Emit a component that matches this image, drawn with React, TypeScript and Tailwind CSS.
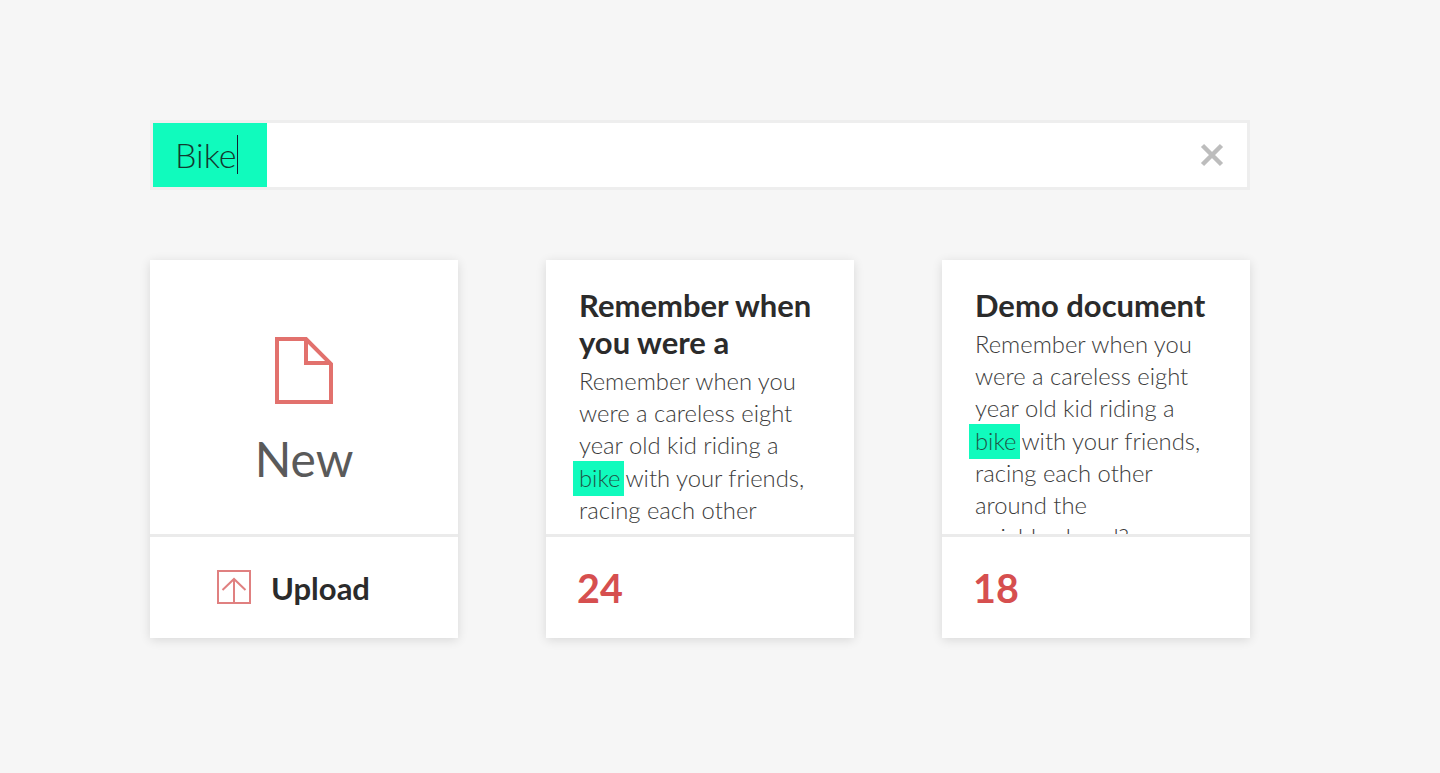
import React from 'react';

const CARDS = [
  {
    title: ['Remember when', 'you were a'],
    lines: ['Remember when you', 'were a careless eight', 'year old kid riding a', 'HL', 'racing each other', 'around the', 'neighborhood?'],
    count: 24,
  },
  {
    title: ['Demo document'],
    lines: ['Remember when you', 'were a careless eight', 'year old kid riding a', 'HL', 'racing each other', 'around the', 'neighborhood?'],
    count: 18,
  },
];

function DocCard({ title, lines, count }: { title: string[]; lines: string[]; count: number }) {
  return (
    <div className="w-[308px] h-[378px] flex flex-col bg-white shadow-[0_2px_10px_rgba(0,0,0,0.12)]">
      <div className="h-[274px] overflow-hidden px-[33px] pt-[27px]">
        <h3 className="text-[31px] leading-[37px] font-bold text-[#2b2b2b] whitespace-nowrap">
          {title.map(t => <div key={t}>{t}</div>)}
        </h3>
        <div className="mt-[4px] text-[23.8px] leading-[32.2px] font-light text-[#3c3c3c] whitespace-nowrap">
          {lines.map(line => line === 'HL' ? (
            <div key={line}>
              <span className="bg-[#10fbbd] -ml-[6px] pl-[6px] pr-[4px] pt-[3px] pb-[4px] mr-[1px] text-[#1f5546]">bike</span>with your friends,
            </div>
          ) : (
            <div key={line}>{line}</div>
          ))}
        </div>
      </div>
      <div className="h-[104px] border-t-[3px] border-[#ebebeb] flex items-center px-[31px]">
        <span className="text-[39.5px] font-bold text-[#d64f4f] leading-none">{count}</span>
      </div>
    </div>
  );
}

export default function App() {
  return (
    <div className="min-h-[773px] bg-[#f6f6f6] pt-[120px] pl-[150px] font-['Lato',sans-serif] overflow-hidden">
      <div className="w-[1100px] h-[70px] flex items-stretch justify-between bg-white border-[3px] border-[#eeeeee]">
        <div className="w-[114px] bg-[#10fbbd] flex items-center pl-[22px] pb-[2px] text-[34px] font-light text-[#123a30]">
          Bike<span className="w-[1px] h-[39px] bg-[#123] ml-[1px]" />
        </div>
        <div className="flex items-center pr-[23px]">
          <svg width="24" height="24" viewBox="0 0 24 24" fill="none">
            <path d="M2.5 2.5 L21.5 21.5 M21.5 2.5 L2.5 21.5" stroke="#bdbdbd" strokeWidth="4.5" />
          </svg>
        </div>
      </div>

      <div className="w-[1100px] flex justify-between mt-[70px]">
        <div className="w-[308px] h-[378px] flex flex-col bg-white shadow-[0_2px_10px_rgba(0,0,0,0.12)]">
          <div className="h-[274px] flex flex-col items-center pt-[77px]">
            <svg width="58" height="67" viewBox="0 0 58 67" fill="none" stroke="#e2716d" strokeWidth="4">
              <path d="M2 2 H31 L56 27 V65 H2 Z" />
              <path d="M31 2 V26 H56" />
            </svg>
            <span className="mt-[26px] text-[48px] leading-[58px] font-normal text-[#5a5a5a]">New</span>
          </div>
          <div className="h-[104px] border-t-[3px] border-[#ebebeb] flex items-center pl-[67px] pb-[2px]">
            <svg width="34" height="34" viewBox="0 0 34 34" fill="none" stroke="#e08080" strokeWidth="2">
              <rect x="1" y="1" width="32" height="32" />
              <path d="M17 33 V9 M5.5 20 L17 9 L28.5 20" />
            </svg>
            <span className="ml-[20px] mt-[4px] text-[31px] font-bold text-[#2b2b2b] leading-none">Upload</span>
          </div>
        </div>
        {CARDS.map(card => <DocCard key={card.count} {...card} />)}
      </div>
    </div>
  );
}
